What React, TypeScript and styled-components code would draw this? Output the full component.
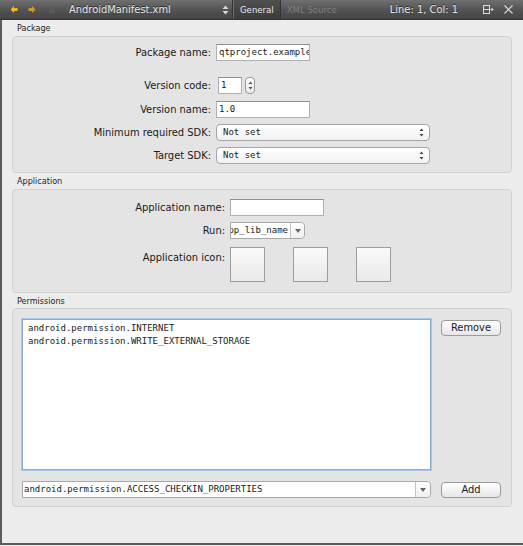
import styled, { createGlobalStyle } from 'styled-components';

const GlobalStyle = createGlobalStyle`
  html, body {
    margin: 0;
    padding: 0;
    background: #ececec;
  }
  * {
    box-sizing: border-box;
  }
`;

const UI_FONT = `"DejaVu Sans", "Liberation Sans", sans-serif`;
const MONO_FONT = `"DejaVu Sans Mono", "Liberation Mono", monospace`;

const permissions = [
  'android.permission.INTERNET',
  'android.permission.WRITE_EXTERNAL_STORAGE',
];

const UpDownArrows = ({ color }: { color: string }) => (
  <svg width='5' height='9' viewBox='0 0 5 9'>
    <path d='M2.5 0.5 L4.5 3 H0.5 Z' fill={color} />
    <path d='M2.5 8.5 L4.5 6 H0.5 Z' fill={color} />
  </svg>
);

const DownArrow = () => (
  <svg width='6' height='4' viewBox='0 0 6 4'>
    <path d='M0 0 H6 L3 4 Z' fill='#666' />
  </svg>
);

const App = () => {
  return (
    <>
      <GlobalStyle />
      <SWindow>
        <SToolbar>
          <SNavArrows>
            <svg width='8' height='9' viewBox='0 0 8 9'>
              <path d='M0.5 4.5 L4 1 V3 H7.5 V6 H4 V8 Z' fill='#f5b81c' />
            </svg>
            <svg width='8' height='9' viewBox='0 0 8 9'>
              <path d='M7.5 4.5 L4 1 V3 H0.5 V6 H4 V8 Z' fill='#c9992c' />
            </svg>
            <SDimIcon>
              <svg width='8' height='9' viewBox='0 0 8 9'>
                <rect x='1' y='3' width='6' height='5' fill='#5a5a5a' />
              </svg>
            </SDimIcon>
          </SNavArrows>
          <SFileName>AndroidManifest.xml</SFileName>
          <SUpDown>
            <svg width='7' height='10' viewBox='0 0 7 10'>
              <path d='M3.5 0.5 L6.5 4 H0.5 Z' fill='#d8d8d8' />
              <path d='M3.5 9.5 L6.5 6 H0.5 Z' fill='#d8d8d8' />
            </svg>
          </SUpDown>
          <STab $active>General</STab>
          <STab>XML Source</STab>
          <SPosition>Line: 1, Col: 1</SPosition>
          <SToolIcon>
            <svg width='11' height='11' viewBox='0 0 11 11'>
              <rect x='0.5' y='1.5' width='6' height='8' fill='none' stroke='#dcdcdc' />
              <line x1='0.5' y1='5.5' x2='6.5' y2='5.5' stroke='#dcdcdc' />
              <line x1='7.5' y1='5.5' x2='10.5' y2='5.5' stroke='#dcdcdc' />
              <line x1='9' y1='4' x2='9' y2='7' stroke='#dcdcdc' />
            </svg>
          </SToolIcon>
          <SToolIcon>
            <svg width='9' height='9' viewBox='0 0 9 9'>
              <path d='M0.5 0.5 L8.5 8.5 M8.5 0.5 L0.5 8.5' stroke='#dcdcdc' strokeWidth='1.2' />
            </svg>
          </SToolIcon>
        </SToolbar>

        <SBody>
          <SGroupTitle>Package</SGroupTitle>
          <SGroup $pad='7px 0 8px'>
            <SRow $labelWidth={203}>
              <SLabel>Package name:</SLabel>
              <STextField $width={94}>qtproject.example</STextField>
            </SRow>
            <SRow $labelWidth={203} $mt={16}>
              <SLabel>Version code:</SLabel>
              <STextField $width={24} $ml={2}>1</STextField>
              <SSpinner>
                <UpDownArrows color='#555' />
              </SSpinner>
            </SRow>
            <SRow $labelWidth={203} $mt={7}>
              <SLabel>Version name:</SLabel>
              <STextField $width={94}>1.0</STextField>
            </SRow>
            <SRow $labelWidth={203} $mt={6}>
              <SLabel>Minimum required SDK:</SLabel>
              <SPopup $width={214}>
                Not set
                <SPopupArrows>
                  <UpDownArrows color='#444' />
                </SPopupArrows>
              </SPopup>
            </SRow>
            <SRow $labelWidth={203} $mt={6}>
              <SLabel>Target SDK:</SLabel>
              <SPopup $width={214}>
                Not set
                <SPopupArrows>
                  <UpDownArrows color='#444' />
                </SPopupArrows>
              </SPopup>
            </SRow>
          </SGroup>

          <SGroupTitle>Application</SGroupTitle>
          <SGroup $pad='9px 0 10px'>
            <SRow $labelWidth={217}>
              <SLabel>Application name:</SLabel>
              <STextField $width={94} />
            </SRow>
            <SRow $labelWidth={217} $mt={6}>
              <SLabel>Run:</SLabel>
              <SEditCombo $width={75}>
                <SComboText $clipStart>app_lib_name</SComboText>
                <SComboButton>
                  <DownArrow />
                </SComboButton>
              </SEditCombo>
            </SRow>
            <SRow $labelWidth={217} $mt={8} $top>
              <SLabel $pt={4}>Application icon:</SLabel>
              <SIconSlots>
                <SIconSlot />
                <SIconSlot />
                <SIconSlot />
              </SIconSlots>
            </SRow>
          </SGroup>

          <SGroupTitle $tight>Permissions</SGroupTitle>
          <SPermGroup>
            <SPermRow>
              <SList>
                {permissions.map((p) => (
                  <SListItem key={p}>{p}</SListItem>
                ))}
              </SList>
              <SButton>Remove</SButton>
            </SPermRow>
            <SPermRow $center>
              <SEditCombo $width={409}>
                <SComboText>android.permission.ACCESS_CHECKIN_PROPERTIES</SComboText>
                <SComboButton $wide>
                  <DownArrow />
                </SComboButton>
              </SEditCombo>
              <SButton $flat>Add</SButton>
            </SPermRow>
          </SPermGroup>
        </SBody>
      </SWindow>
    </>
  );
};

export default App;

const SWindow = styled.div`
  width: 523px;
  height: 546px;
  display: flex;
  flex-direction: column;
  background: #ececec;
  font-family: ${UI_FONT};
  font-stretch: condensed;
  color: #1a1a1a;
  overflow: hidden;
`;

const SToolbar = styled.div`
  height: 20px;
  flex-shrink: 0;
  display: flex;
  align-items: center;
  background: linear-gradient(#707070, #545454 50%, #444444);
  border-bottom: 1px solid #333;
  padding-left: 10px;
`;

const SNavArrows = styled.div`
  display: flex;
  align-items: center;
  gap: 10px;
  width: 59px;
`;

const SDimIcon = styled.div`
  display: flex;
  margin-left: 2px;
`;

const SFileName = styled.div`
  width: 153px;
  font-size: 11px;
  color: #e8e8e8;
  text-shadow: 0 -1px 0 #2a2a2a;
`;

const SUpDown = styled.div`
  width: 11px;
  height: 100%;
  display: flex;
  align-items: center;
  border-right: 1px solid #353535;
`;

const STab = styled.div<{ $active?: boolean }>`
  height: 100%;
  display: flex;
  align-items: center;
  padding: 0 6px;
  font-size: 9.5px;
  color: ${(p) => (p.$active ? '#e8e8e8' : '#808080')};
  background: ${(p) => (p.$active ? 'linear-gradient(#505050, #3b3b3b)' : 'transparent')};
  border-right: ${(p) => (p.$active ? '1px solid #333' : 'none')};
  border-left: ${(p) => (p.$active ? '1px solid #6c6c6c' : 'none')};
`;

const SPosition = styled.div`
  margin-left: auto;
  margin-right: 25px;
  font-size: 11px;
  color: #e8e8e8;
  text-shadow: 0 -1px 0 #2a2a2a;
`;

const SToolIcon = styled.div`
  display: flex;
  align-items: center;
  margin-right: 10px;
`;

const SBody = styled.div`
  flex: 1;
  display: flex;
  flex-direction: column;
  padding: 0 11px 0 10px;
  border-left: 2px solid #5c5c5c;
  border-bottom: 2px solid #5c5c5c;
  margin-bottom: 1px;
`;

const SGroupTitle = styled.div<{ $tight?: boolean }>`
  font-size: 9px;
  line-height: 11px;
  height: ${(p) => (p.$tight ? 15 : 16)}px;
  padding: 3px 0 0 5px;
  color: #1e1e1e;
`;

const SGroup = styled.div<{ $pad: string }>`
  display: flex;
  flex-direction: column;
  padding: ${(p) => p.$pad};
  background: #e4e4e4;
  border: 1px solid #d2d2d2;
  border-radius: 4px;
`;

const SRow = styled.div<{ $labelWidth: number; $mt?: number; $top?: boolean }>`
  display: flex;
  align-items: ${(p) => (p.$top ? 'flex-start' : 'center')};
  margin-top: ${(p) => p.$mt ?? 0}px;
  & > :first-child {
    width: ${(p) => p.$labelWidth}px;
  }
`;

const SLabel = styled.div<{ $pt?: number }>`
  text-align: right;
  font-size: 11px;
  padding-right: 5px;
  padding-top: ${(p) => p.$pt ?? 0}px;
  white-space: nowrap;
  flex-shrink: 0;
`;

const STextField = styled.div<{ $width: number; $ml?: number }>`
  width: ${(p) => p.$width}px;
  height: 17px;
  margin-left: ${(p) => p.$ml ?? 0}px;
  background: #fff;
  border: 1px solid #b0b0b0;
  border-top-color: #8e8e8e;
  font-family: ${MONO_FONT};
  font-stretch: normal;
  font-size: 9px;
  line-height: 15px;
  padding-left: 2px;
  white-space: nowrap;
  overflow: hidden;
`;

const SSpinner = styled.div`
  width: 10px;
  height: 17px;
  margin-left: 3px;
  border: 1px solid #9a9a9a;
  border-radius: 4px;
  background: linear-gradient(#fdfdfd, #e8e8e8);
  display: flex;
  align-items: center;
  justify-content: center;
`;

const SPopup = styled.div<{ $width: number }>`
  position: relative;
  width: ${(p) => p.$width}px;
  height: 17px;
  border: 1px solid #a5a5a5;
  border-radius: 4px;
  background: linear-gradient(#ffffff, #f1f1f1);
  font-family: ${MONO_FONT};
  font-stretch: normal;
  font-size: 9px;
  line-height: 15px;
  padding-left: 6px;
`;

const SPopupArrows = styled.div`
  position: absolute;
  right: 5px;
  top: 3px;
  display: flex;
`;

const SEditCombo = styled.div<{ $width: number }>`
  width: ${(p) => p.$width}px;
  height: 17px;
  display: flex;
  border: 1px solid #a8a8a8;
  border-radius: 0 4px 4px 0;
  background: #fff;
`;

const SComboText = styled.div<{ $clipStart?: boolean }>`
  flex: 1;
  min-width: 0;
  display: flex;
  justify-content: ${(p) => (p.$clipStart ? 'flex-end' : 'flex-start')};
  font-family: ${MONO_FONT};
  font-stretch: normal;
  font-size: 9px;
  line-height: 15px;
  padding: 0 2px 0 1px;
  white-space: nowrap;
  overflow: hidden;
`;

const SComboButton = styled.div<{ $wide?: boolean }>`
  width: ${(p) => (p.$wide ? 15 : 14)}px;
  flex-shrink: 0;
  border-left: 1px solid #c4c4c4;
  border-radius: 0 4px 4px 0;
  background: linear-gradient(#ffffff, #eeeeee);
  display: flex;
  align-items: center;
  justify-content: center;
`;

const SIconSlots = styled.div`
  display: flex;
  gap: 28px;
`;

const SIconSlot = styled.div`
  width: 35px;
  height: 35px;
  border: 1px solid #9d9d9d;
  background: linear-gradient(#fafafa, #e9e9e9);
`;

const SPermGroup = styled.div`
  display: flex;
  flex-direction: column;
  gap: 11px;
  padding: 10px 10px 8px 9px;
  background: #e4e4e4;
  border: 1px solid #d2d2d2;
  border-radius: 4px;
`;

const SPermRow = styled.div<{ $center?: boolean }>`
  display: flex;
  align-items: ${(p) => (p.$center ? 'center' : 'flex-start')};
  gap: 10px;
`;

const SList = styled.div`
  width: 409px;
  height: 151px;
  background: #fff;
  border: 1px solid #8aa8d0;
  box-shadow: 0 0 0 1px #a9c6ec;
  padding: 2px 5px;
`;

const SListItem = styled.div`
  font-family: ${MONO_FONT};
  font-stretch: normal;
  font-size: 9px;
  line-height: 13px;
  white-space: nowrap;
`;

const SButton = styled.div<{ $flat?: boolean }>`
  width: 60px;
  height: 16px;
  margin-top: ${(p) => (p.$flat ? 0 : 1)}px;
  border: 1px solid #9b9b9b;
  border-radius: 4px;
  background: linear-gradient(#ffffff, #f3f3f3 50%, #e6e6e6);
  font-size: 11px;
  line-height: 14px;
  text-align: center;
`;
